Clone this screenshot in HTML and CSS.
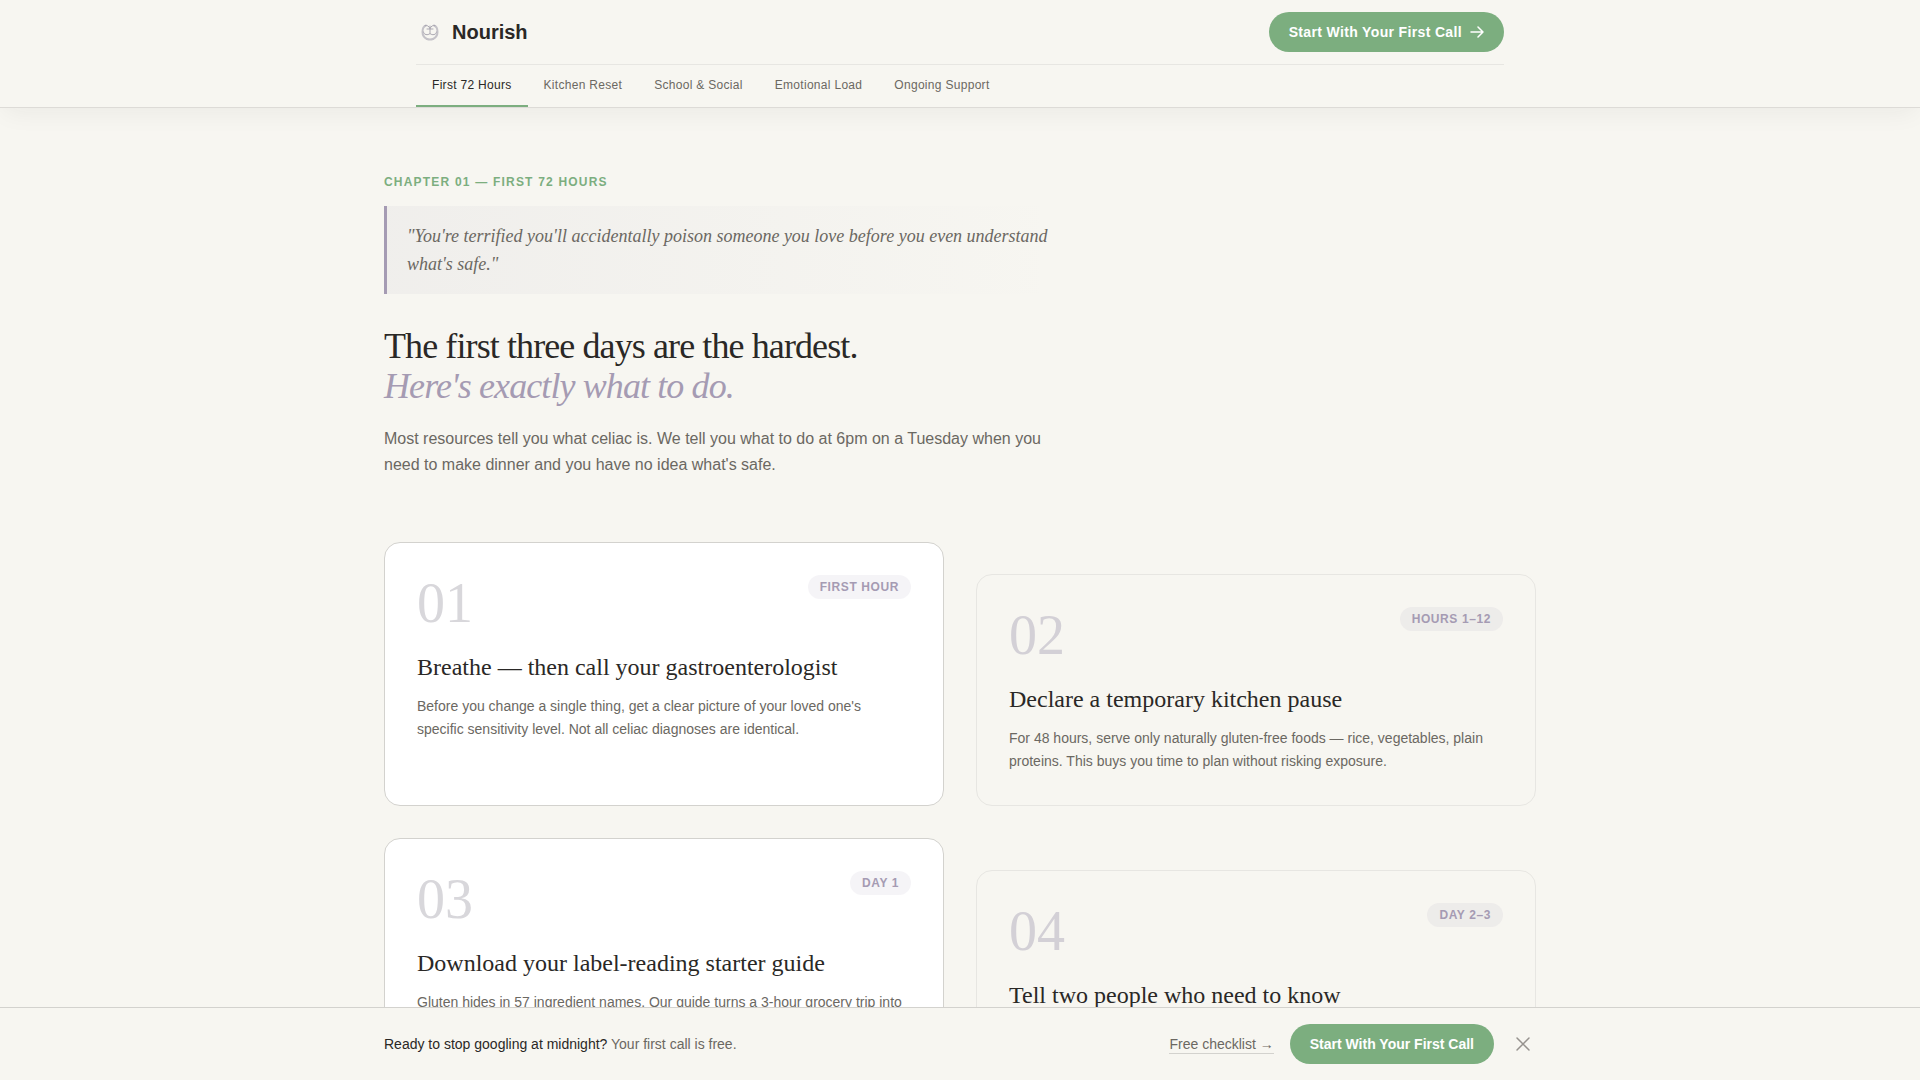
FILE: index.html
```html
<!DOCTYPE html>
<html lang="en">
<head>
    <meta charset="UTF-8">
    <meta name="viewport" content="width=device-width, initial-scale=1.0">
    <title>Nourish</title>
    <link rel="stylesheet" href="styles.css">
</head>
<body>
    <header class="site-header">
        <div class="header-inner">
            <div class="header-top">
                <a href="#" class="logo">
                    <svg class="logo-icon" width="28" height="28" viewBox="0 0 28 28" fill="none" stroke-linecap="round" aria-hidden="true">
                        <g stroke="#c4c2c8" stroke-width="2">
                            <path d="M10 7.500c-3 1-3.500 4-3.500 6.500s1.500 5.500 4.500 7"/>
                            <path d="M18 7.500c3 1 3.500 4 3.500 6.500s-1.500 5.500-4.500 7"/>
                            <path d="M11 21c2 .7 4 .7 6 0"/>
                        </g>
                        <g stroke="#aba8b2">
                            <path d="M14 10.500c-1-2.500-3-3.500-5-3M14 10.500c1-2.500 3-3.500 5-3"/>
                            <path d="M14 8v7.500M11 11h6"/>
                            <path d="M7.500 14c0 3 4.500 3.500 6.500 1.500 2 2 6.500 1.500 6.500-1.500"/>
                        </g>
                    </svg>
                    <span>Nourish</span>
                </a>
                <a href="#" class="btn btn-header">
                    Start With Your First Call
                    <svg width="14" height="14" viewBox="0 0 14 14" fill="none" stroke="currentColor" stroke-width="1.5" stroke-linecap="round" stroke-linejoin="round" aria-hidden="true">
                        <path d="M1 7h12M8 2l5 5-5 5"/>
                    </svg>
                </a>
            </div>
            <nav class="tabs">
                <a href="#first-72" class="tab active">First 72 Hours</a>
                <a href="#kitchen" class="tab">Kitchen Reset</a>
                <a href="#school" class="tab">School &amp; Social</a>
                <a href="#emotional" class="tab">Emotional Load</a>
                <a href="#ongoing" class="tab">Ongoing Support</a>
            </nav>
        </div>
    </header>

    <main class="chapter" id="first-72">
        <div class="intro">
            <p class="eyebrow">Chapter 01 — First 72 Hours</p>
            <blockquote class="quote">"You're terrified you'll accidentally poison someone you love before you even understand what's safe."</blockquote>
            <h1>The first three days are the hardest.<br><em>Here's exactly what to do.</em></h1>
            <p class="lead">Most resources tell you what celiac is. We tell you what to do at 6pm on a Tuesday when you need to make dinner and you have no idea what's safe.</p>
        </div>

        <div class="steps">
            <article class="card">
                <div class="card-head">
                    <span class="number">01</span>
                    <span class="badge">First Hour</span>
                </div>
                <h2>Breathe — then call your gastroenterologist</h2>
                <p>Before you change a single thing, get a clear picture of your loved one's specific sensitivity level. Not all celiac diagnoses are identical.</p>
            </article>
            <article class="card card-offset">
                <div class="card-head">
                    <span class="number">02</span>
                    <span class="badge">Hours 1–12</span>
                </div>
                <h2>Declare a temporary kitchen pause</h2>
                <p>For 48 hours, serve only naturally gluten-free foods — rice, vegetables, plain proteins. This buys you time to plan without risking exposure.</p>
            </article>
            <article class="card">
                <div class="card-head">
                    <span class="number">03</span>
                    <span class="badge">Day 1</span>
                </div>
                <h2>Download your label-reading starter guide</h2>
                <p>Gluten hides in 57 ingredient names. Our guide turns a 3-hour grocery trip into a quick one.</p>
            </article>
            <article class="card card-offset">
                <div class="card-head">
                    <span class="number">04</span>
                    <span class="badge">Day 2–3</span>
                </div>
                <h2>Tell two people who need to know</h2>
            </article>
        </div>
    </main>

    <aside class="cta-bar">
        <div class="cta-inner">
            <p class="cta-text"><strong>Ready to stop googling at midnight?</strong> Your first call is free.</p>
            <div class="cta-actions">
                <a href="#" class="checklist">Free checklist →</a>
                <a href="#" class="btn">Start With Your First Call</a>
                <button type="button" class="close" aria-label="Dismiss">
                    <svg width="18" height="18" viewBox="0 0 18 18" fill="none" stroke="currentColor" stroke-width="1.5" stroke-linecap="round" aria-hidden="true">
                        <path d="M3 3l12 12M15 3L3 15"/>
                    </svg>
                </button>
            </div>
        </div>
    </aside>
</body>
</html>
```
FILE: styles.css
```css
:root {
    --bg: #f7f6f1;
    --ink: #2a2826;
    --muted: #6b6862;
    --green: #7cae7f;
    --purple: #a59bb3;
    --line: #d3d2ce;
    --line-soft: #e7e6e2;
    --sans: "Liberation Sans", Arial, sans-serif;
    --serif: "Liberation Serif", "Times New Roman", serif;
}
* {
    box-sizing: border-box;
    margin: 0;
    padding: 0;
}
body {
    font-family: var(--sans);
    background-color: var(--bg);
    color: var(--ink);
}
a {
    color: inherit;
    text-decoration: none;
}

/* Header */
.site-header {
    position: sticky;
    top: 0;
    z-index: 10;
    background-color: var(--bg);
    border-bottom: 1px solid #dddbd7;
    box-shadow: 0 8px 24px -4px rgba(42, 40, 38, 0.06);
}
.header-inner {
    max-width: 1152px;
    margin: 0 auto;
    padding: 0 32px;
}
.header-top {
    display: flex;
    align-items: center;
    justify-content: space-between;
    height: 65px;
    border-bottom: 1px solid var(--line-soft);
}
.logo {
    display: flex;
    align-items: center;
    gap: 8px;
    font-size: 20px;
    font-weight: bold;
}
.btn {
    display: flex;
    align-items: center;
    gap: 8px;
    height: 40px;
    padding: 0 20px;
    border-radius: 20px;
    background-color: var(--green);
    color: #fff;
    font-size: 14px;
    font-weight: bold;
    white-space: nowrap;
}
.btn:hover {
    background-color: #6c9f70;
}
.btn-header {
    letter-spacing: 0.025em;
}
.tabs {
    display: flex;
}
.tab {
    padding: 12px 16px;
    border-bottom: 2px solid transparent;
    color: var(--muted);
    font-size: 12px;
    line-height: 16px;
    letter-spacing: 0.025em;
}
.tab.active {
    color: var(--ink);
    border-bottom-color: var(--green);
}

/* Chapter */
.chapter {
    max-width: 1152px;
    margin: 0 auto;
    padding: 64px 0 128px;
}
.intro {
    max-width: 672px;
    margin-bottom: 64px;
}
.eyebrow {
    margin-bottom: 14px;
    color: var(--green);
    font-size: 12px;
    font-weight: bold;
    line-height: 20px;
    letter-spacing: 0.1em;
    text-transform: uppercase;
}
.quote {
    margin-bottom: 32px;
    padding: 16px 0 16px 20px;
    border-left: 3px solid var(--purple);
    background: linear-gradient(to right, rgba(155, 150, 175, 0.08), transparent);
    color: var(--muted);
    font-family: var(--serif);
    font-size: 18px;
    font-style: italic;
    line-height: 28px;
}
h1 {
    margin-bottom: 20px;
    font-family: var(--serif);
    font-size: 36px;
    font-weight: normal;
    line-height: 40px;
    letter-spacing: -0.025em;
}
h1 em {
    color: var(--purple);
}
.lead {
    color: var(--muted);
    font-size: 16px;
    line-height: 26px;
}

/* Step cards */
.steps {
    display: grid;
    grid-template-columns: 1fr 1fr;
    gap: 32px;
}
.card {
    min-height: 232px;
    padding: 32px;
    border: 1px solid var(--line);
    border-radius: 16px;
    background-color: #fff;
}
.card-offset {
    margin-top: 32px;
    border-color: var(--line-soft);
    background-color: transparent;
}
.card-head {
    display: flex;
    align-items: flex-start;
    justify-content: space-between;
    margin-bottom: 20px;
}
.number {
    color: #d8d7db;
    font-family: var(--serif);
    font-size: 56px;
    line-height: 56px;
}
.card-offset .number {
    color: #d3d0d6;
}
.badge {
    padding: 0 12px;
    border-radius: 12px;
    background-color: rgba(155, 150, 175, 0.1);
    color: var(--purple);
    font-size: 12px;
    font-weight: bold;
    line-height: 24px;
    letter-spacing: 0.05em;
    text-transform: uppercase;
}
.card h2 {
    margin-bottom: 12px;
    font-family: var(--serif);
    font-size: 24px;
    font-weight: normal;
    line-height: 32px;
}
.card p {
    color: var(--muted);
    font-size: 14px;
    line-height: 23px;
}

/* Bottom bar */
.cta-bar {
    position: fixed;
    left: 0;
    right: 0;
    bottom: 0;
    z-index: 10;
    background-color: var(--bg);
    border-top: 1px solid var(--line);
}
.cta-inner {
    display: flex;
    align-items: center;
    justify-content: space-between;
    max-width: 1152px;
    margin: 0 auto;
    padding: 16px 0;
}
.cta-text {
    color: var(--muted);
    font-size: 14px;
}
.cta-text strong {
    color: var(--ink);
    font-weight: normal;
}
.cta-actions {
    display: flex;
    align-items: center;
    gap: 16px;
}
.checklist {
    border-bottom: 1px solid var(--line);
    color: var(--muted);
    font-size: 14px;
    line-height: 18px;
}
.close {
    display: flex;
    padding: 4px;
    border: none;
    background: none;
    color: #96928e;
    cursor: pointer;
}
```
